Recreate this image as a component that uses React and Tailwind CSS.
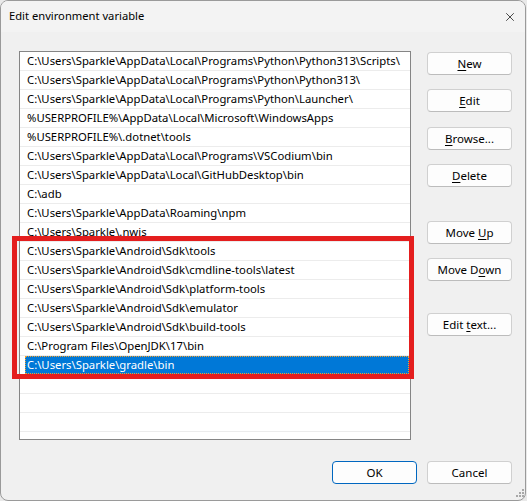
import { X } from "lucide-react";

const paths = [
  "C:\\Users\\Sparkle\\AppData\\Local\\Programs\\Python\\Python313\\Scripts\\",
  "C:\\Users\\Sparkle\\AppData\\Local\\Programs\\Python\\Python313\\",
  "C:\\Users\\Sparkle\\AppData\\Local\\Programs\\Python\\Launcher\\",
  "%USERPROFILE%\\AppData\\Local\\Microsoft\\WindowsApps",
  "%USERPROFILE%\\.dotnet\\tools",
  "C:\\Users\\Sparkle\\AppData\\Local\\Programs\\VSCodium\\bin",
  "C:\\Users\\Sparkle\\AppData\\Local\\GitHubDesktop\\bin",
  "C:\\adb",
  "C:\\Users\\Sparkle\\AppData\\Roaming\\npm",
  "C:\\Users\\Sparkle\\.nwjs",
  "C:\\Users\\Sparkle\\Android\\Sdk\\tools",
  "C:\\Users\\Sparkle\\Android\\Sdk\\cmdline-tools\\latest",
  "C:\\Users\\Sparkle\\Android\\Sdk\\platform-tools",
  "C:\\Users\\Sparkle\\Android\\Sdk\\emulator",
  "C:\\Users\\Sparkle\\Android\\Sdk\\build-tools",
  "C:\\Program Files\\OpenJDK\\17\\bin",
  "C:\\Users\\Sparkle\\gradle\\bin",
];

const SELECTED = 16;

// label with the mnemonic letter underlined, e.g. ["", "N", "ew"]
const Btn = ({ label, className = "" }) => (
  <button
    type="button"
    className={`h-[23px] w-[85px] rounded-[4px] border border-[#d0d0d0] border-b-[#bcbcbc] bg-[#fdfdfd] text-[11.5px] text-black ${className}`}
  >
    {label[0]}
    <span className="underline underline-offset-2">{label[1]}</span>
    {label[2]}
  </button>
);

const App = () => {
  const rows = [...paths, "", "", "", ""];

  return (
    <div className="h-[501px] w-[527px] bg-[#e9e9e9] font-['Noto_Sans',sans-serif]">
      <div className="flex h-[501px] w-[526px] flex-col overflow-hidden rounded-[8px] border border-[#9a9a9a] bg-[#f0f0f0]">
        {/* title bar */}
        <div className="flex h-[31px] shrink-0 items-center justify-between bg-[#f3f3f3] pl-[8px] pr-[8px]">
          <span className="text-[11.2px] text-black">Edit environment variable</span>
          <X size={14} strokeWidth={1.2} className="text-black" />
        </div>

        <div className="relative flex flex-1 flex-col pl-[18px] pr-[13px] pt-[19px]">
          <div className="flex gap-[16px]">
            {/* path list */}
            <div className="h-[389px] w-[392px] shrink-0 overflow-hidden border border-[#858585] bg-white">
              {rows.map((p, i) => (
                <div
                  key={i}
                  className="flex h-[19px] items-stretch border-b border-[#ececec] pl-[5px] pr-[1px]"
                >
                  {i === SELECTED ? (
                    <div className="flex flex-1 items-center border border-dotted border-[#f0a030] bg-[#0078d7] pl-[1px] text-[11.3px] leading-none text-white">
                      {p}
                    </div>
                  ) : (
                    <div className="flex flex-1 items-center pl-[2px] text-[11.3px] leading-none text-black whitespace-nowrap">
                      {p}
                    </div>
                  )}
                </div>
              ))}
            </div>

            {/* side buttons */}
            <div className="flex flex-col pt-[1px]">
              <Btn label={["", "N", "ew"]} />
              <Btn label={["", "E", "dit"]} className="mt-[14px]" />
              <Btn label={["", "B", "rowse..."]} className="mt-[15px]" />
              <Btn label={["", "D", "elete"]} className="mt-[14px]" />
              <Btn label={["Move ", "U", "p"]} className="mt-[34px]" />
              <Btn label={["Move D", "o", "wn"]} className="mt-[14px]" />
              <Btn label={["Edit ", "t", "ext..."]} className="mt-[32px]" />
            </div>
          </div>

          {/* dialog buttons */}
          <div className="mt-[21px] flex w-[493px] justify-end gap-[10px]">
            <button
              type="button"
              className="h-[23px] w-[85px] rounded-[4px] border border-[#0067c0] bg-[#fdfdfd] text-[11.5px] text-black"
            >
              OK
            </button>
            <button
              type="button"
              className="h-[23px] w-[85px] rounded-[4px] border border-[#d0d0d0] border-b-[#bcbcbc] bg-[#fdfdfd] text-[11.5px] text-black"
            >
              Cancel
            </button>
          </div>

          {/* highlight around the Android / JDK entries */}
          <div className="pointer-events-none absolute left-[11px] top-[204px] h-[143px] w-[402px] border-[5px] border-[#e41e1e]" />

          {/* resize grip */}
          <svg className="absolute bottom-[1px] right-[1px]" width="10" height="10" viewBox="0 0 10 10">
            {[[8, 0], [5, 3], [8, 3], [2, 6], [5, 6], [8, 6]].map(([x, y]) => (
              <rect key={`${x}-${y}`} x={x} y={y} width="2" height="2" fill="#a8a8a8" />
            ))}
          </svg>
        </div>
      </div>
    </div>
  );
};

export default App;
